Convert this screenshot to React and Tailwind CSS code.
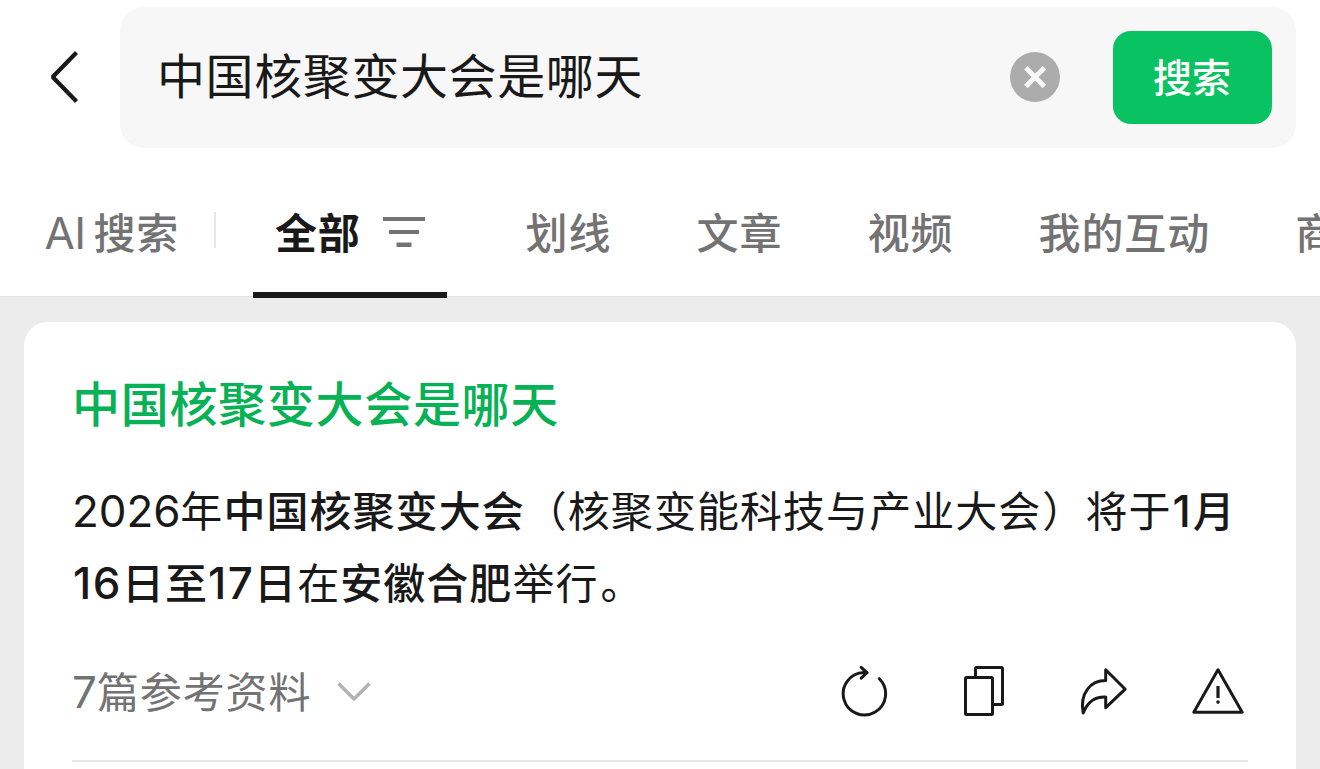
const tabs = ["划线", "文章", "视频", "我的互动", "商品"];

const BackIcon = () => (
  <svg width="32" height="54" viewBox="0 0 32 54" fill="none" stroke="#191919" strokeWidth="4.2">
    <path d="M28.5 2.5 4.7 27l23.8 24.5" strokeLinejoin="bevel" />
  </svg>
);

const ClearIcon = () => (
  <svg width="50" height="50" viewBox="0 0 50 50">
    <circle cx="25" cy="25" r="25" fill="#acacac" />
    <path d="M15.8 15.8 34.4 34.4M34.4 15.8 15.8 34.4" stroke="#f7f7f7" strokeWidth="4.9" />
  </svg>
);

const FilterIcon = () => (
  <svg width="42" height="30" viewBox="0 0 42 30" fill="#737373">
    <rect width="42" height="4" />
    <rect x="6" y="13" width="30" height="4" />
    <rect x="13.5" y="25.5" width="15" height="4.5" />
  </svg>
);

const ChevronIcon = () => (
  <svg width="34" height="20" viewBox="0 0 34 20" fill="none" stroke="#b2b2b2" strokeWidth="3.4">
    <path d="M1.5 1.5 17 17 32.5 1.5" strokeLinejoin="round" />
  </svg>
);

const RefreshIcon = () => (
  <svg width="52" height="56" viewBox="0 0 52 56" fill="none" stroke="#191919" strokeWidth="3" strokeLinecap="round" strokeLinejoin="round">
    <path d="M39.3 14.7A21.2 21.2 0 1 1 24 8.6h3" />
    <path d="M21.2 3.4l5.8 5.2-5.8 5.6" />
  </svg>
);

const CopyIcon = () => (
  <svg width="52" height="56" viewBox="0 0 52 56" fill="none" stroke="#191919" strokeWidth="3" strokeLinejoin="round">
    <rect x="7.5" y="13.5" width="27" height="37" rx="1" />
    <path d="M17.5 13.5v-9q0-1 1-1h25q1 0 1 1v35q0 1-1 1h-9" />
  </svg>
);

const ShareIcon = () => (
  <svg width="52" height="56" viewBox="0 0 52 56" fill="none" stroke="#191919" strokeWidth="3" strokeLinejoin="round">
    <path d="M29.7 5.7 49.2 25.2 29.7 43.7V33.1C20 32.6 12.5 36 7.2 48.9 3.5 29 14.5 16.6 29.7 16.6Z" />
  </svg>
);

const ReportIcon = () => (
  <svg
    className="overflow-visible"
    width="54"
    height="56"
    viewBox="0 0 54 56"
    fill="none"
    stroke="#191919"
    strokeWidth="3"
    strokeLinejoin="round"
  >
    <path d="M24 5.8 48.2 48.2H-.2Z" />
    <path d="M24 22v12" strokeWidth="3.2" />
    <circle cx="24" cy="38.1" r="1.8" fill="#191919" stroke="none" />
  </svg>
);

const SearchHeader = () => (
  <header className="flex h-37 items-start pt-[7px] pl-12">
    <button className="mt-[43px] h-[54px] w-[72px] shrink-0">
      <BackIcon />
    </button>
    <div className="flex h-[141px] w-[1176px] items-center rounded-3xl bg-[#f7f7f7] pr-6 pl-[37px]">
      <p className="flex-1 pb-px text-[48px] leading-[72px] tracking-[0.6px]">中国核聚变大会是哪天</p>
      <button className="mr-[53px] mb-px">
        <ClearIcon />
      </button>
      <button className="h-[93px] w-[159px] rounded-[18px] bg-[#09c261] pt-px pr-px text-[39px] font-medium text-white">
        搜索
      </button>
    </div>
  </header>
);

const TabBar = () => (
  <nav className="flex h-[149px] items-start border-b border-[#e2e2e2] text-[42px] leading-[60px] tracking-[0.7px] text-[#737373]">
    <div className="mt-14 ml-[44.5px] w-[169.5px] shrink-0 font-medium whitespace-nowrap">
      <span className="text-[44px] leading-none font-normal tracking-[-0.6px]">AI</span>
      <span className="ml-[8px]">搜索</span>
    </div>
    <div className="mt-16 h-9 w-[2px] shrink-0 bg-[#e8e8e8]" />
    <div className="ml-[36.5px] flex h-[150px] w-[194px] shrink-0 items-start border-b-6 border-[#191919] pl-[22.5px]">
      <span className="mt-14 font-bold text-[#191919]">全部</span>
      <span className="mt-[69px] ml-[23px]">
        <FilterIcon />
      </span>
    </div>
    <div className="mt-14 ml-[79px] flex gap-[85.2px] font-medium tracking-[0.9px] whitespace-nowrap">
      {tabs.map((tab) => (
        <span key={tab}>{tab}</span>
      ))}
    </div>
  </nav>
);

const AnswerCard = () => (
  <section className="mx-6 mt-[25px] h-[520px] rounded-3xl bg-white px-12 pt-[47px]">
    <h2 className="text-[48px] leading-[72px] font-medium tracking-[0.7px] text-[#07b155]">中国核聚变大会是哪天</h2>
    <p className="mt-[35px] text-[42px] leading-[72px] tracking-[1.05px] whitespace-nowrap">
      <span className="text-[44px] leading-none tracking-[-0.1px]">2026</span>年
      <b className="font-medium">中国核聚变大会</b>
      （核聚变能科技与产业大会<span className="ml-px">）</span>将于
      <b className="font-medium">
        <span className="ml-px text-[44px] leading-none tracking-[2px]">1</span>月
      </b>
      <br />
      <b className="font-medium">
        <span className="ml-px text-[44px] leading-none tracking-[1.5px]">16</span>日至
        <span className="text-[44px] leading-none tracking-[1.3px]">17</span>日
      </b>
      在<b className="font-medium">安徽合肥</b>举行<span className="ml-[2px]">。</span>
    </p>
    <div className="mt-9 flex h-[72px] items-center">
      <span className="pt-px text-[42px] leading-[72px] tracking-[0.9px] text-[#737373]">
        <span className="text-[44px] leading-none tracking-[0px]">7</span>篇参考资料
      </span>
      <span className="ml-[26px]">
        <ChevronIcon />
      </span>
      <div className="ml-auto flex items-center gap-[66px]">
        <RefreshIcon />
        <CopyIcon />
        <ShareIcon />
        <ReportIcon />
      </div>
    </div>
    <div className="mt-8 h-[2px] bg-[#e6e6e6]" />
  </section>
);

const App = () => {
  return (
    <div
      lang="zh-CN"
      className="h-[769px] w-[1320px] overflow-hidden bg-[#ececec] font-['Inter','Noto_Sans_CJK_SC',sans-serif] text-[#191919]"
    >
      <div className="bg-white">
        <SearchHeader />
        <TabBar />
      </div>
      <AnswerCard />
    </div>
  );
};

export default App;
